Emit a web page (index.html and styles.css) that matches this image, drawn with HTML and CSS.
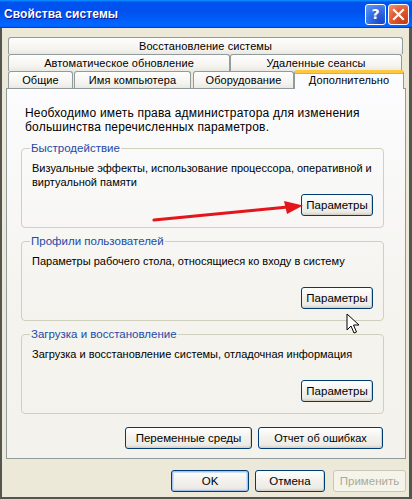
FILE: index.html
```html
<!DOCTYPE html>
<html lang="ru">
<head>
<meta charset="UTF-8">
<meta name="viewport" content="width=device-width, initial-scale=1.0">
<title>Свойства системы</title>
<link rel="stylesheet" href="styles.css">
</head>
<body>
    <div class="window">
        <div class="titlebar">
            <span class="title">Свойства системы</span>
            <div class="controls">
                <button class="ctl help">?</button>
                <button class="ctl close">
                    <svg width="13" height="13" viewBox="0 0 13 13"><path d="M2 2 L11 11 M11 2 L2 11" stroke="#fff" stroke-width="2.2" stroke-linecap="square"/></svg>
                </button>
            </div>
        </div>

        <div class="body">
            <div class="tabs">
                <div class="tab-row">
                    <div class="tab t-restore">Восстановление системы</div>
                </div>
                <div class="tab-row">
                    <div class="tab t-update">Автоматическое обновление</div>
                    <div class="tab t-remote">Удаленные сеансы</div>
                </div>
                <div class="tab-row">
                    <div class="tab t-general">Общие</div>
                    <div class="tab t-name">Имя компьютера</div>
                    <div class="tab t-hw">Оборудование</div>
                    <div class="tab t-adv selected">Дополнительно</div>
                </div>
            </div>

            <div class="panel">
                <p class="intro">Необходимо иметь права администратора для изменения<br>большинства перечисленных параметров.</p>

                <fieldset class="group">
                    <legend>Быстродействие</legend>
                    <div class="group-body">
                        <p>Визуальные эффекты, использование процессора, оперативной и<br>виртуальной памяти</p>
                        <div class="group-actions"><button class="btn">Параметры</button></div>
                    </div>
                </fieldset>

                <fieldset class="group">
                    <legend>Профили пользователей</legend>
                    <div class="group-body">
                        <p>Параметры рабочего стола, относящиеся ко входу в систему</p>
                        <div class="group-actions"><button class="btn">Параметры</button></div>
                    </div>
                </fieldset>

                <fieldset class="group">
                    <legend>Загрузка и восстановление</legend>
                    <div class="group-body">
                        <p>Загрузка и восстановление системы, отладочная информация</p>
                        <div class="group-actions"><button class="btn">Параметры</button></div>
                    </div>
                </fieldset>

                <div class="panel-actions">
                    <button class="btn btn-env">Переменные среды</button>
                    <button class="btn btn-err">Отчет об ошибках</button>
                </div>
            </div>

            <div class="dialog-actions">
                <button class="btn btn-ok default">OK</button>
                <button class="btn btn-cancel">Отмена</button>
                <button class="btn btn-apply" disabled>Применить</button>
            </div>
        </div>

        <!-- red pointer arrow drawn over the dialog -->
        <svg class="arrow" width="170" height="30" viewBox="0 0 170 30">
            <path d="M2 21 L136 8" stroke="#e3161d" stroke-width="3.2" stroke-linecap="round"/>
            <path d="M132 2 L151 6.5 L135 15 Z" fill="#e3161d"/>
        </svg>

        <!-- mouse pointer -->
        <svg class="cursor" width="14" height="22" viewBox="0 0 14 22">
            <path d="M1 1 L1 17 L5 13 L8 20 L10.5 19 L7.5 12 L13 12 Z" fill="#fff" stroke="#000" stroke-width="1" stroke-linejoin="miter"/>
        </svg>
    </div>
</body>
</html>
```

FILE: styles.css
```css
body {
    margin: 0;
    padding: 0;
    font-family: "Liberation Sans", Arial, sans-serif;
    font-size: 12px;
    color: #000;
}
p {
    margin: 0;
}
.window {
    position: relative;
    width: 412px;
    height: 499px;
    box-sizing: border-box;
    background: #ece9d8;
    border-left: 2px solid #55554f;
    border-right: 3px solid #55554f;
    border-bottom: 2px solid #55554f;
    display: flex;
    flex-direction: column;
}

/* title bar */
.titlebar {
    height: 28px;
    margin: 0 -3px 0 -2px;
    background: linear-gradient(180deg, #0997ff, #0053ee 8%, #0050ee 40%, #0066ff 88%, #0066ff 93%, #005bff 95%, #003dd7 96%, #003dd7);
    display: flex;
    align-items: center;
    justify-content: space-between;
    padding: 0 3px 0 4px;
}
.title {
    color: #fff;
    font-weight: bold;
    font-size: 12px;
    letter-spacing: 0.1px;
    text-shadow: 1px 1px #0f1089;
}
.controls {
    display: flex;
    gap: 2px;
}
.ctl {
    width: 21px;
    height: 21px;
    border: 1px solid #fff;
    border-radius: 3px;
    padding: 0;
    display: flex;
    align-items: center;
    justify-content: center;
    color: #fff;
    font-family: "DejaVu Sans", sans-serif;
    font-weight: bold;
    font-size: 14px;
}
.help {
    background: radial-gradient(circle at 80% 90%, #1846c8 0, #3570e8 55%, #6a9af5 100%);
}
.close {
    background: radial-gradient(circle at 80% 90%, #c73a18 0, #e2592f 55%, #f09a7a 100%);
}

/* dialog body */
.body {
    flex: 1;
    display: flex;
    flex-direction: column;
    padding: 9px 3px 0 4px;
}
.tabs {
    padding-left: 2px;
}
.tab-row {
    display: flex;
    height: 17px;
}
.tab {
    box-sizing: border-box;
    height: 17px;
    line-height: 16px;
    font-size: 11px;
    letter-spacing: 0.1px;
    text-align: center;
    border: 1px solid #919b9c;
    border-bottom: none;
    border-radius: 3px 3px 0 0;
    background: linear-gradient(#fefefe, #f4f3ee 70%, #e9e8e1);
    white-space: nowrap;
}
.t-restore { width: 395px; }
.t-update { width: 222px; }
.t-remote { width: 172px; }
.t-general { width: 65px; }
.t-name { width: 117px; margin-left: 1px; }
.t-hw { width: 101px; margin-left: 2px; }
.tab.selected {
    position: relative;
    z-index: 1;
    width: 110px;
    height: 19px;
    margin-top: -1px;
    margin-left: 0;
    line-height: 14px;
    background: #fcfcfe;
    border-top: 3px solid #ffc83c;
    box-shadow: inset 0 1px #f5a623;
}

/* tab page */
.panel {
    box-sizing: border-box;
    width: 400px;
    height: 371px;
    border: 1px solid #919b9c;
    background: linear-gradient(#fcfcfe, #f4f3ee 60%, #f3f2ec);
    padding: 17px 0 0 14px;
    display: flex;
    flex-direction: column;
}
.intro {
    line-height: 14px;
    margin-left: 4px;
    letter-spacing: 0.2px;
    white-space: nowrap;
}
.group {
    width: 363px;
    min-width: 0;
    box-sizing: border-box;
    margin: 8px 0 0 0;
    padding: 0 0 0 10px;
    border: 1px solid #d0d0bf;
    border-radius: 4px;
}
.group + .group {
    margin-top: 7px;
}
.group legend {
    color: #1c4aa8;
    font-size: 11.5px;
    line-height: 13px;
    padding: 0 1px;
    margin-left: -2px;
}
.group-body {
    height: 72px;
    box-sizing: border-box;
    padding: 6px 0 11px 0;
    display: flex;
    flex-direction: column;
    justify-content: space-between;
    line-height: 14px;
}
.group-body p {
    font-size: 11px;
    white-space: nowrap;
}
.group-actions {
    display: flex;
    justify-content: flex-end;
    padding-right: 10px;
}

/* buttons */
.btn {
    font-family: "Liberation Sans", Arial, sans-serif;
    font-size: 11.5px;
    color: #000;
    height: 22px;
    width: 72px;
    padding: 0;
    border: 1px solid #003c74;
    border-radius: 3px;
    background: linear-gradient(#ffffff, #f3f2ee 45%, #ecebe6 85%, #d6d0c5);
    box-shadow: inset -1px -1px #d6d0c5;
}
.btn.default {
    box-shadow: inset 0 0 0 1px #a6c1ee, inset 0 0 0 2px #cfe0fa;
}
.btn:disabled {
    border-color: #c9c7ba;
    color: #aca899;
    background: #f5f4ea;
    box-shadow: none;
}
.panel-actions {
    display: flex;
    justify-content: flex-end;
    gap: 6px;
    margin: 13px 22px 0 0;
}
.btn-env { width: 127px; }
.btn-err { width: 125px; font-size: 11px; }
.dialog-actions {
    display: flex;
    justify-content: flex-end;
    gap: 6px;
    margin-top: 11px;
}
.btn-ok { width: 78px; }
.btn-cancel { width: 70px; }
.btn-apply { width: 73px; margin-left: 2px; }

/* overlays */
.arrow {
    position: absolute;
    left: 150px;
    top: 199px;
}
.cursor {
    position: absolute;
    left: 344px;
    top: 313px;
}
```
